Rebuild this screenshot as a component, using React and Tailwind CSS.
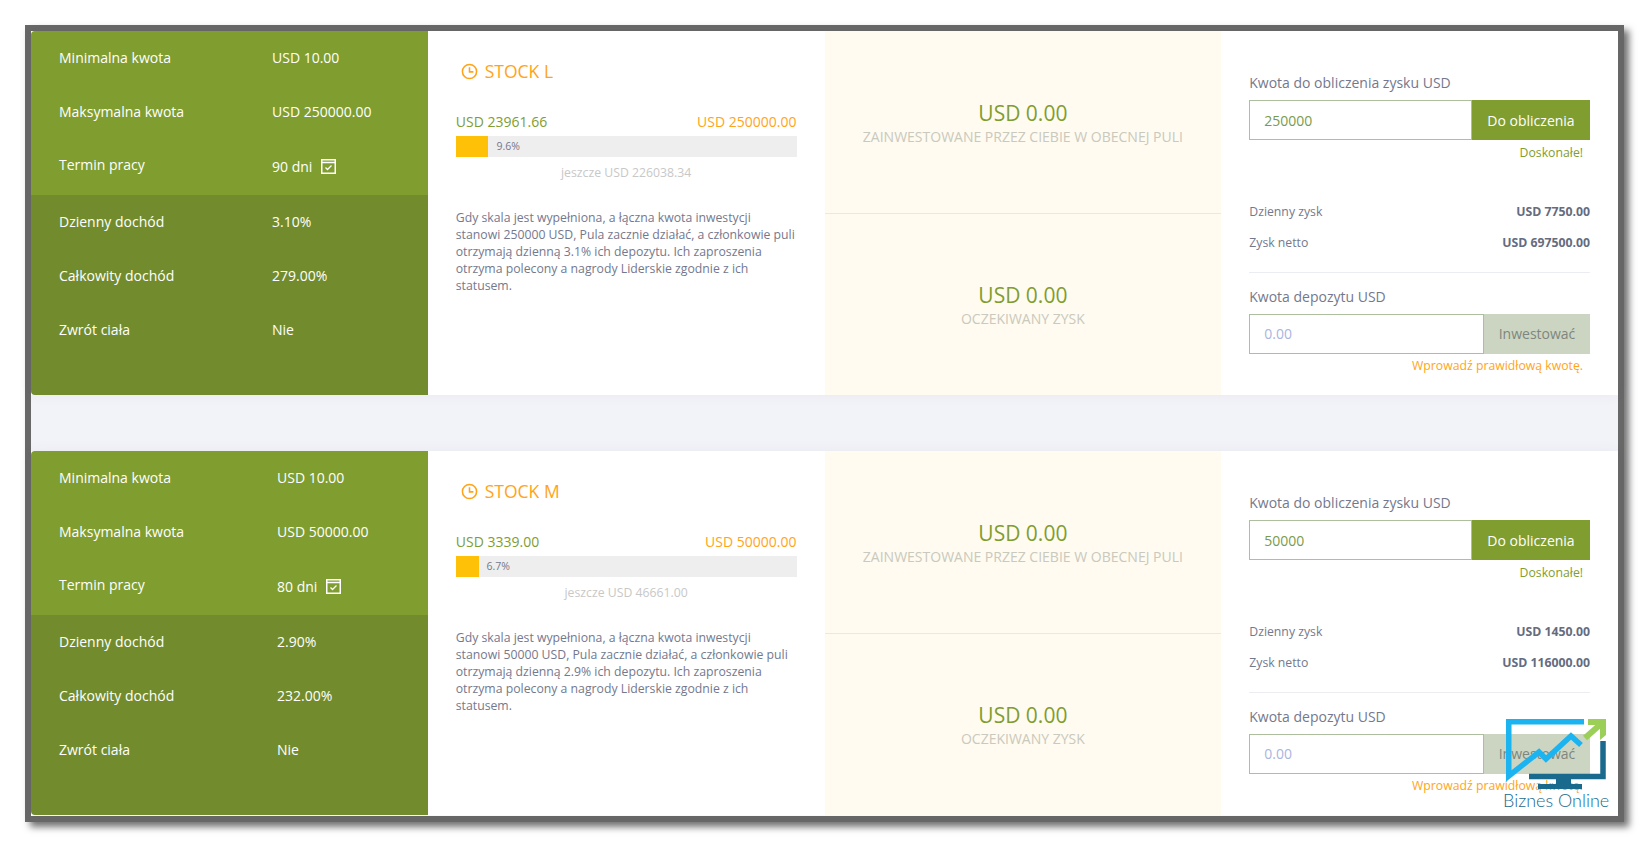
import React from 'react';

const pools = [
  {
    name: 'STOCK L',
    valueCol: 'w-[213px]',
    min: 'USD 10.00',
    max: 'USD 250000.00',
    days: '90 dni',
    daily: '3.10%',
    total: '279.00%',
    raised: 'USD 23961.66',
    cap: 'USD 250000.00',
    percent: 9.6,
    left: 'jeszcze USD 226038.34',
    desc: 'Gdy skala jest wypełniona, a łączna kwota inwestycji stanowi 250000 USD, Pula zacznie działać, a członkowie puli otrzymają dzienną 3.1% ich depozytu. Ich zaproszenia otrzyma polecony a nagrody Liderskie zgodnie z ich statusem.',
    calc: '250000',
    dailyProfit: 'USD 7750.00',
    netProfit: 'USD 697500.00',
  },
  {
    name: 'STOCK M',
    valueCol: 'w-[218px]',
    min: 'USD 10.00',
    max: 'USD 50000.00',
    days: '80 dni',
    daily: '2.90%',
    total: '232.00%',
    raised: 'USD 3339.00',
    cap: 'USD 50000.00',
    percent: 6.7,
    left: 'jeszcze USD 46661.00',
    desc: 'Gdy skala jest wypełniona, a łączna kwota inwestycji stanowi 50000 USD, Pula zacznie działać, a członkowie puli otrzymają dzienną 2.9% ich depozytu. Ich zaproszenia otrzyma polecony a nagrody Liderskie zgodnie z ich statusem.',
    calc: '50000',
    dailyProfit: 'USD 1450.00',
    netProfit: 'USD 116000.00',
  },
];

function ClockIcon() {
  return (
    <svg width="17" height="17" viewBox="0 0 24 24" fill="none" stroke="#ffa41a" strokeWidth="2.2">
      <circle cx="12" cy="12" r="10" />
      <path d="M12 6v6.5h5.5" />
    </svg>
  );
}

function CalendarCheckIcon() {
  return (
    <svg width="15" height="15" viewBox="0 0 15 15" fill="none" stroke="#ffffff">
      <rect x="0.75" y="0.75" width="13.5" height="13.5" strokeWidth="1.5" />
      <path d="M1 3.5h13" strokeWidth="1.5" />
      <path d="M4.5 8.5l2 2 4-4" strokeWidth="1.3" />
    </svg>
  );
}

function InfoRow({ label, value, valueCol, children }) {
  return (
    <div className="flex items-center h-[54px] pl-7">
      <div className={`${valueCol} shrink-0 ${children ? 'pb-[2px]' : ''}`}>{label}</div>
      <div className="flex items-center">
        <span className={children ? 'pt-[2px]' : ''}>{value}</span>
        {children}
      </div>
    </div>
  );
}

function InputGroup({ value, placeholder, button, disabled }) {
  return (
    <div className="flex h-10">
      <input
        readOnly
        defaultValue={value}
        placeholder={placeholder}
        className={`flex-1 min-w-0 h-10 pl-[14px] text-sm text-[#7a9a4c] placeholder:text-[#aab4e0] bg-white border border-[#aebf9f] outline-none ${disabled ? 'pb-[2px]' : ''}`}
      />
      <button
        className={
          disabled
            ? 'w-[106px] h-10 text-sm bg-[#cbd5c2] text-[#7f867e]'
            : 'w-[118px] h-10 pt-[2px] text-sm bg-[#809d30] text-white'
        }
      >
        {button}
      </button>
    </div>
  );
}

function PoolCard({ pool }) {
  return (
    <div className="relative grid grid-cols-4 h-[364px] bg-white shadow-[0_0_13px_rgba(82,63,105,0.05)]">
      {/* Pool facts */}
      <div className="flex flex-col text-sm text-white rounded-l-[4px] overflow-hidden">
        <div className="h-[164px] bg-[#809d30]">
          <InfoRow label="Minimalna kwota" value={pool.min} valueCol={pool.valueCol} />
          <InfoRow label="Maksymalna kwota" value={pool.max} valueCol={pool.valueCol} />
          <InfoRow label="Termin pracy" value={pool.days} valueCol={pool.valueCol}>
            <span className="ml-[9px]">
              <CalendarCheckIcon />
            </span>
          </InfoRow>
        </div>
        <div className="flex-1 bg-[#728c2d]">
          <InfoRow label="Dzienny dochód" value={pool.daily} valueCol={pool.valueCol} />
          <InfoRow label="Całkowity dochód" value={pool.total} valueCol={pool.valueCol} />
          <InfoRow label="Zwrót ciała" value="Nie" valueCol={pool.valueCol} />
        </div>
      </div>

      {/* Progress */}
      <div className="px-7 pt-[26px]">
        <div className="flex items-center h-7 pl-[5px] gap-[7px] text-[#ffa41a] text-[17.5px]">
          <ClockIcon />
          <span>{pool.name}</span>
        </div>
        <div className="flex justify-between mt-[27px] text-sm leading-5 text-[#809d30]">
          <span>{pool.raised}</span>
          <span className="text-[#ffa41a]">{pool.cap}</span>
        </div>
        <div className="flex mt-[4px] h-[21px] bg-[#eeeeee]">
          <div className="bg-[#ffc107]" style={{ width: `${pool.percent}%` }} />
          <span className="ml-[8px] text-[10.5px] leading-[21px] text-[#74788d]">{pool.percent}%</span>
        </div>
        <p className="mt-[7px] text-center text-[12.25px] leading-[18px] text-[#c8c8c8]">{pool.left}</p>
        <p className="mt-[27px] text-[12.25px] leading-[17px] text-[#74788d]">{pool.desc}</p>
      </div>

      {/* Own stake */}
      <div className="flex flex-col bg-[#fffbf0]">
        <div className="h-[183px] pt-[66px] text-center border-b border-[#ece9dc]">
          <p className="text-[21px] leading-8 text-[#809d30]">USD 0.00</p>
          <p className="text-sm leading-4 text-[#c9c9bd]">ZAINWESTOWANE PRZEZ CIEBIE W OBECNEJ PULI</p>
        </div>
        <div className="pt-[65px] text-center">
          <p className="text-[21px] leading-8 text-[#809d30]">USD 0.00</p>
          <p className="text-sm leading-4 text-[#c9c9bd]">OCZEKIWANY ZYSK</p>
        </div>
      </div>

      {/* Calculator */}
      <div className="px-7 pt-[42px] text-[#74788d]">
        <p className="text-sm leading-5">Kwota do obliczenia zysku USD</p>
        <div className="mt-[7px]">
          <InputGroup value={pool.calc} button="Do obliczenia" />
        </div>
        <p className="mt-[5px] pr-[7px] text-right text-[12.25px] leading-4 text-[#809d30]">Doskonałe!</p>
        <div className="flex justify-between mt-[42px] text-[12.25px] leading-[18px]">
          <span>Dzienny zysk</span>
          <span className="font-bold text-[#646c7f]">{pool.dailyProfit}</span>
        </div>
        <div className="flex justify-between mt-[13px] text-[12.25px] leading-[18px]">
          <span>Zysk netto</span>
          <span className="font-bold text-[#646c7f]">{pool.netProfit}</span>
        </div>
        <div className="mt-[20px] border-t border-[#ebedf2]" />
        <p className="mt-[14px] text-sm leading-5">Kwota depozytu USD</p>
        <div className="mt-[7px]">
          <InputGroup placeholder="0.00" button="Inwestować" disabled />
        </div>
        <p className="mt-[4px] pr-[7px] text-right text-[12.25px] leading-4 text-[#ffa41a]">Wprowadź prawidłową kwotę.</p>
      </div>
    </div>
  );
}

function Logo() {
  return (
    <div className="absolute left-[1472px] top-[688px] w-[110px]">
      <svg width="100" height="70" viewBox="0 0 100 70" className="block ml-[3px]" fill="none">
        <path d="M78 2.75H2.75V57L33 33l7 7L65 17l10 9" stroke="#1bb4f0" strokeWidth="5.5" />
        <path d="M79 19L96 4" stroke="#9ccf58" strokeWidth="6" />
        <path d="M82 0H100V16L94 21V6H82Z" fill="#9ccf58" />
        <path d="M97 22V57.5H23" stroke="#1a6a8e" strokeWidth="5.5" />
        <path d="M50 60H65V65H50Z" fill="#1a6a8e" />
        <path d="M32 65H76V70H32Z" fill="#1a6a8e" />
      </svg>
      <p className="font-['Lato',sans-serif] font-light text-lg leading-5 text-[#1a6a8e] whitespace-nowrap mt-[1px]">
        Biznes Online
      </p>
    </div>
  );
}

export default function App() {
  return (
    <div className="min-h-screen bg-white pt-[25px] pl-[25px] font-['Open_Sans',sans-serif]">
      <div className="relative w-[1599px] border-[6px] border-[#686868] bg-[#f2f3f8] shadow-[5px_5px_7px_rgba(0,0,0,0.55)]">
        <PoolCard pool={pools[0]} />
        <div className="h-14" />
        <PoolCard pool={pools[1]} />
        <div className="h-px bg-white" />
        <Logo />
      </div>
    </div>
  );
}
